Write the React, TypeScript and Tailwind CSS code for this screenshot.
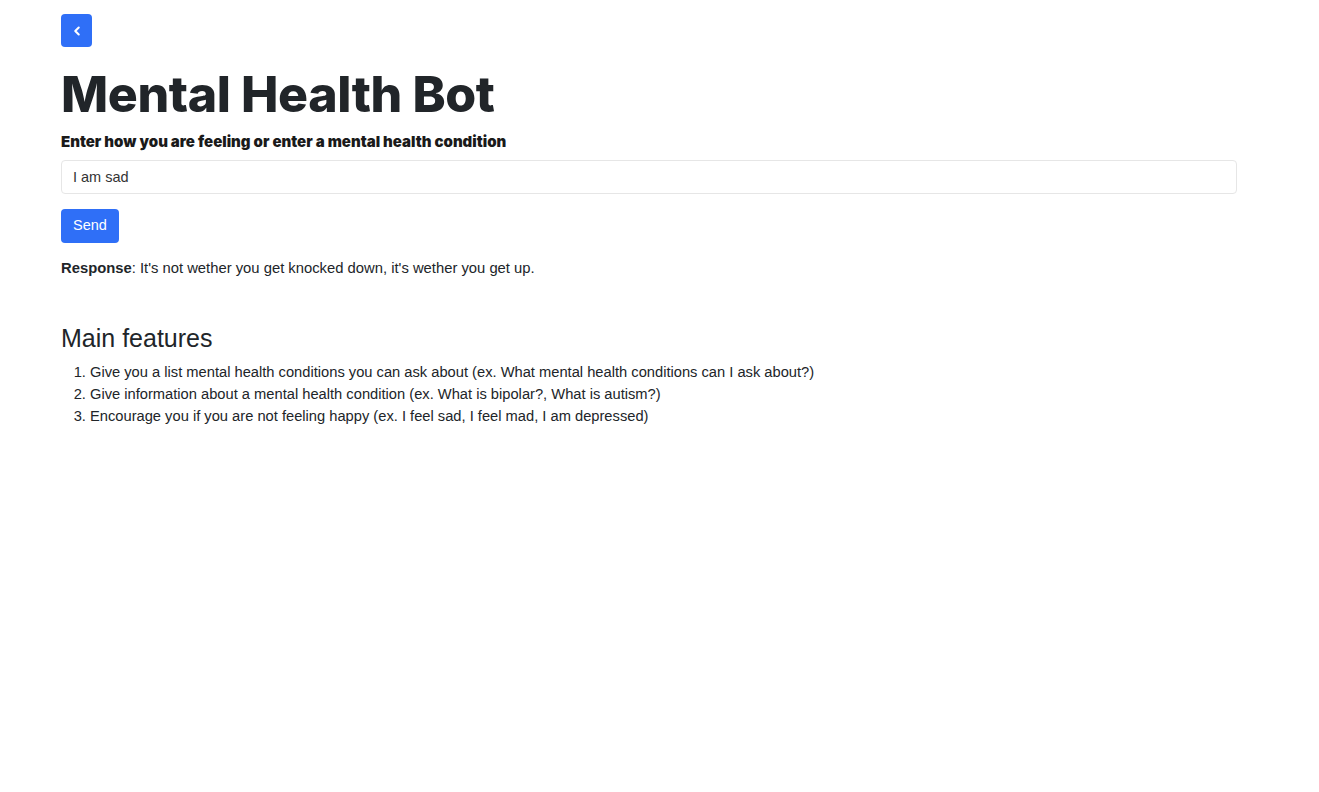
import { ChevronLeft } from 'lucide-react';

const features = [
  'Give you a list mental health conditions you can ask about (ex. What mental health conditions can I ask about?)',
  'Give information about a mental health condition (ex. What is bipolar?, What is autism?)',
  'Encourage you if you are not feeling happy (ex. I feel sad, I feel mad, I am depressed)',
];

export default function App() {
  return (
    <div className="min-h-screen bg-white text-[#212529] font-['Liberation_Sans',sans-serif]">
      <div className="pl-[61px] pr-[82px] pt-[14px]">
        <button
          type="button"
          className="flex h-[33px] w-[31px] items-center justify-center rounded-[4px] bg-[#2f6ff7] text-white"
        >
          <ChevronLeft className="h-[14px] w-[14px]" strokeWidth={3.5} />
        </button>

        <h1 className="mt-[17px] font-['Inter',sans-serif] text-[50px] font-extrabold leading-[60px] tracking-[-0.4px]">
          Mental Health Bot
        </h1>

        <label className="mt-[8px] block font-['Inter',sans-serif] text-[15px] font-black leading-[20px] text-[#1a1a1a]">
          Enter how you are feeling or enter a mental health condition
        </label>

        <input
          defaultValue="I am sad"
          className="mt-[8px] block h-[34px] w-full rounded-[4px] border border-[#e6e6e6] px-[11px] text-[14.5px] text-[#333] outline-none"
        />

        <button
          type="button"
          className="mt-[15px] h-[34px] rounded-[4px] bg-[#2f6ff7] px-[12px] text-[14.5px] text-white"
        >
          Send
        </button>

        <p className="mt-[15px] text-[14.8px] leading-[20px]">
          <span className="font-bold">Response</span>: It's not wether you get knocked down, it's wether you get up.
        </p>

        <h2 className="mt-[45px] text-[25px] leading-[30px]">Main features</h2>

        <ol className="mt-[8px] list-decimal pl-[29px] text-[14.7px] leading-[22px]">
          {features.map((f) => (
            <li key={f}>{f}</li>
          ))}
        </ol>
      </div>
    </div>
  );
}
